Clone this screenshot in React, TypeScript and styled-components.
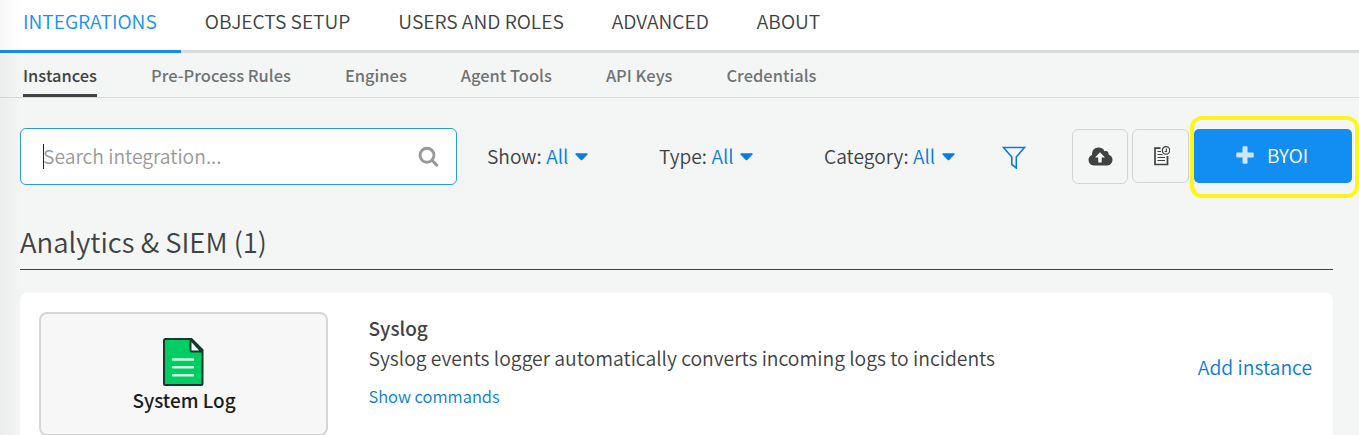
import React from 'react';
import styled, { createGlobalStyle } from 'styled-components';

const GlobalStyle = createGlobalStyle`
  * { box-sizing: border-box; }
  body {
    margin: 0;
    background: #f4f6f6;
    color: #404142;
    font-family: "Noto Sans CJK SC", "Noto Sans", sans-serif;
    overflow: hidden;
  }
`;

const Page = styled.div`
  position: relative;
  height: 435px;
  overflow: hidden;
`;

const EdgeShade = styled.div`
  position: absolute;
  inset: 0 auto 0 0;
  width: 22px;
  background: linear-gradient(to right, rgba(0, 0, 0, 0.035), rgba(0, 0, 0, 0));
  pointer-events: none;
`;

const MainNav = styled.nav`
  display: flex;
  height: 53px;
  background: #fff;
  box-shadow: inset 0 -3px #d9dbdb;
`;

const MainTab = styled.a<{ $active?: boolean }>`
  padding: 0 24px 0 ${p => (p.$active ? 23 : 24)}px;
  font-size: 19.23px;
  font-weight: 350;
  line-height: 42px;
  white-space: nowrap;
  color: ${p => (p.$active ? '#1790f5' : '#404142')};
  border-bottom: 3px solid ${p => (p.$active ? '#128df2' : 'transparent')};
`;

const SubNav = styled.nav`
  display: flex;
  gap: 54px;
  height: 45px;
  padding-left: 23px;
  border-bottom: 1px solid #d9dbdb;
`;

const SubTab = styled.a<{ $active?: boolean }>`
  height: 44px;
  font-size: 16.47px;
  font-weight: 500;
  line-height: 45px;
  white-space: nowrap;
  color: ${p => (p.$active ? '#404142' : '#707374')};
  border-bottom: 3px solid ${p => (p.$active ? '#404142' : 'transparent')};
`;

const Toolbar = styled.div`
  display: flex;
  align-items: flex-start;
  padding: 30px 7px 0 20px;
  height: 115px;
`;

const SearchBox = styled.div`
  display: flex;
  align-items: center;
  width: 437px;
  height: 57px;
  padding: 0 17px 0 22px;
  background: #fff;
  border: 1px solid #2f94f3;
  border-radius: 6px;
`;

const Caret = styled.span`
  width: 1px;
  height: 25px;
  background: #222;
`;

const Placeholder = styled.span`
  flex: 1;
  margin-left: -1px;
  padding-bottom: 2px;
  font-size: 19.3px;
  font-weight: 350;
  line-height: 30px;
  color: #999;
`;

const Filters = styled.div`
  display: flex;
  align-items: center;
  height: 57px;
  margin-left: 30px;
`;

const Filter = styled.div<{ $width: number }>`
  display: flex;
  align-items: center;
  width: ${p => p.$width}px;
  font-size: 19.2px;
  font-weight: 350;
  line-height: 30px;
  white-space: nowrap;
`;

const FilterLabel = styled.span`
  padding-bottom: 2px;
`;

const FilterValue = styled(FilterLabel)`
  margin: 0 6.6px 0 4.4px;
  color: #0a7be0;
`;

const Actions = styled.div`
  display: flex;
  gap: 4px;
  margin: 1px 0 0 auto;
`;

const IconButton = styled.button<{ $width: number; $height: number }>`
  display: flex;
  align-items: center;
  justify-content: center;
  width: ${p => p.$width}px;
  height: ${p => p.$height}px;
  padding: 0;
  background: transparent;
  border: 1px solid #d2d4d4;
  border-radius: 6px;
`;

const PrimaryButton = styled.button`
  position: relative;
  display: flex;
  align-items: center;
  width: 158px;
  height: 54px;
  margin-left: 1px;
  padding: 0 0 2px 42px;
  gap: 13px;
  border: 0;
  border-radius: 5px;
  background: #128df2;
  color: #fff;
  font: 350 19px/28px "Noto Sans CJK SC", "Noto Sans", sans-serif;
`;

const Highlight = styled.span`
  position: absolute;
  left: -4px;
  top: -13px;
  width: 169px;
  height: 82px;
  border: 4px solid #fff51a;
  border-radius: 12px;
`;

const SectionTitle = styled.h2`
  height: 57px;
  margin: 0 26px 23px 20px;
  border-bottom: 1px solid #404142;
  font-size: 27.5px;
  font-weight: 350;
  line-height: 56px;
`;

const Card = styled.section`
  display: flex;
  height: 162px;
  margin: 0 26px 0 20px;
  padding: 19px 21px 0 19px;
  background: #fff;
  border-radius: 7px;
`;

const LogoTile = styled.div`
  display: flex;
  flex-direction: column;
  align-items: center;
  width: 289px;
  height: 124px;
  padding-top: 24px;
  background: #f7f7f7;
  border: 2px solid #d6d6d6;
  border-radius: 8px;
`;

const LogoName = styled.span`
  font-size: 18.9px;
  font-weight: 500;
  line-height: 24px;
  margin: 2px 0 0 1px;
  color: #1c1c1c;
`;

const Details = styled.div`
  flex: 1;
  margin-left: 40.5px;
  padding-top: 1px;
`;

const Name = styled.h3`
  margin: 0;
  font-size: 19px;
  font-weight: 500;
  line-height: 29px;
`;

const Description = styled.p`
  margin: 1px 0 0;
  font-size: 19.32px;
  font-weight: 350;
  line-height: 31px;
`;

const CommandsLink = styled.a`
  display: block;
  margin-top: 9px;
  font-size: 16.45px;
  font-weight: 350;
  line-height: 26px;
  color: #0a7be0;
`;

const AddLink = styled.a`
  margin-top: 40px;
  font-size: 19.32px;
  font-weight: 350;
  line-height: 30px;
  color: #0a7be0;
`;

const SearchIcon = () => (
  <svg width="21" height="21" viewBox="0 0 21 21" fill="none" stroke="#999">
    <circle cx="9" cy="9.3" r="7" strokeWidth="2.9" />
    <path d="M14 14.3 18.7 19.1" strokeWidth="3" strokeLinecap="round" />
  </svg>
);

const CaretDown = () => (
  <svg width="13" height="8" viewBox="0 0 13 8" fill="#0a7be0">
    <path d="M1 0.3h11q1 .2.5 1.1L7.3 7q-.8.7-1.6 0L.5 1.4Q0 .5 1 .3z" />
  </svg>
);

const FunnelIcon = () => (
  <svg width="24" height="24" viewBox="0 0 24 24" fill="none" stroke="#0a7be0" strokeWidth="1.6">
    <path d="M1.5 2.5h21L14.3 12v11L9.8 19.5V12z" />
  </svg>
);

const CloudUploadIcon = () => (
  <svg width="25" height="19" viewBox="0 0 25 19">
    <path fill="#404142" d="M6 18.5Q.5 18 .5 12.8.6 9.2 4 7.9 3.8 1 10.6.6q4.2.1 6 3.7 3.9-1 4 3.2 4 1.5 3.9 5.6-.4 5-5.3 5.4z" />
    <path fill="#f4f6f6" d="M12 5.3 17 10.4h-3.3v5h-3.5v-5H7z" />
  </svg>
);

const ScheduleDocIcon = () => (
  <svg width="18" height="20" viewBox="0 0 18 20" fill="none" stroke="#404142">
    <path d="M8.5 2.2H3V18.5H15.5V10" strokeWidth="1.7" />
    <circle cx="14" cy="4.4" r="3.7" strokeWidth="1.2" />
    <path d="M14.4 2.5v3H12.6M5.5 5.5h3.5M5.5 8.5h5M5.5 11.5h7.500M5.500 14.500h7.500" strokeWidth="1.1" />
  </svg>
);

const PlusIcon = () => (
  <svg width="18" height="18" viewBox="0 0 18 18" fill="#cfe7fd">
    <path d="M6.5 1q0-.7.7-.7h3.6q.7 0 .7.7v5.5H17q.7 0 .7.7v3.6q0 .7-.7.7h-5.500V17q0 .7-.7.700H7.200q-.7 0-.7-.7v-5.500H1q-.7 0-.7-.7V7.200q0-.7.7-.7h5.500z" />
  </svg>
);

const SystemLogIcon = () => (
  <svg width="41" height="48" viewBox="0 0 41 48">
    <path d="M2.5 1h26L39.5 12v33.5q0 1.5-1.5 1.5h-35.500Q1 47 1 45.500v-43Q1 1 2.500 1z" fill="#00ce65" stroke="#15392a" strokeWidth="2" />
    <path d="M27.5 1.5V12q0 1.5 1.5 1.5H38.500z" fill="#fff" stroke="#15392a" strokeWidth="2" strokeLinejoin="round" />
    <path d="M10 21.5h20M10 29.3h20M10 37.2h20" stroke="#d5f8e4" strokeWidth="2.4" strokeLinecap="round" />
  </svg>
);

const mainTabs = ['INTEGRATIONS', 'OBJECTS SETUP', 'USERS AND ROLES', 'ADVANCED', 'ABOUT'];

const subTabs = ['Instances', 'Pre-Process Rules', 'Engines', 'Agent Tools', 'API Keys', 'Credentials'];

const filters = [
  { label: 'Show:', width: 172 },
  { label: 'Type:', width: 165 },
  { label: 'Category:', width: 178 },
];

export default function App() {
  return (
    <Page>
      <GlobalStyle />
      <MainNav>
        {mainTabs.map((label, i) => (
          <MainTab key={label} $active={i === 0}>{label}</MainTab>
        ))}
      </MainNav>
      <SubNav>
        {subTabs.map((label, i) => (
          <SubTab key={label} $active={i === 0}>{label}</SubTab>
        ))}
      </SubNav>
      <Toolbar>
        <SearchBox>
          <Caret />
          <Placeholder>Search integration...</Placeholder>
          <SearchIcon />
        </SearchBox>
        <Filters>
          {filters.map(f => (
            <Filter key={f.label} $width={f.width}>
              <FilterLabel>{f.label}</FilterLabel>
              <FilterValue>All</FilterValue>
              <CaretDown />
            </Filter>
          ))}
          <FunnelIcon />
        </Filters>
        <Actions>
          <IconButton $width={56} $height={55}><CloudUploadIcon /></IconButton>
          <IconButton $width={57} $height={54}><ScheduleDocIcon /></IconButton>
          <PrimaryButton>
            <PlusIcon />
            BYOI
            <Highlight />
          </PrimaryButton>
        </Actions>
      </Toolbar>
      <SectionTitle>Analytics &amp; SIEM (1)</SectionTitle>
      <Card>
        <LogoTile>
          <SystemLogIcon />
          <LogoName>System Log</LogoName>
        </LogoTile>
        <Details>
          <Name>Syslog</Name>
          <Description>Syslog events logger automatically converts incoming logs to incidents</Description>
          <CommandsLink>Show commands</CommandsLink>
        </Details>
        <AddLink>Add instance</AddLink>
      </Card>
      <EdgeShade />
    </Page>
  );
}
